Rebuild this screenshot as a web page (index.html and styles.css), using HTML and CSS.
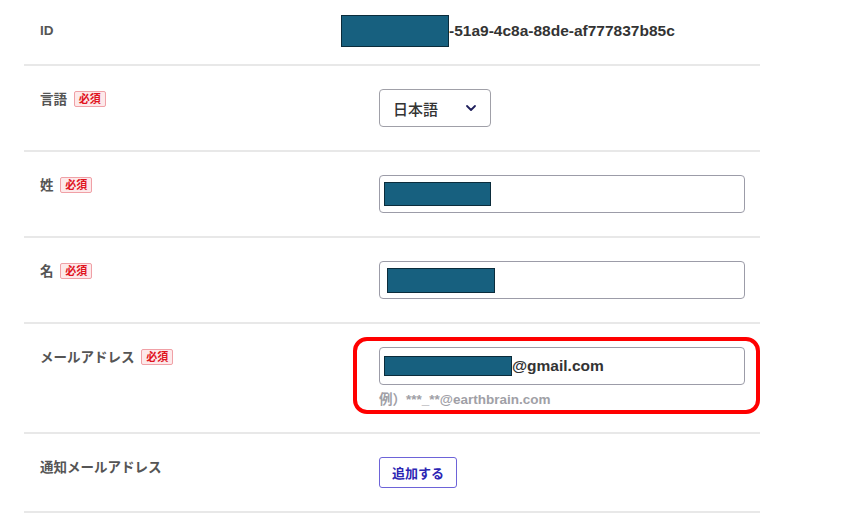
FILE: index.html
```html
<!DOCTYPE html>
<html lang="ja">
<head>
    <meta charset="UTF-8">
    <meta name="viewport" content="width=device-width, initial-scale=1.0">
    <title>アカウント情報</title>
    <link rel="stylesheet" href="styles.css">
</head>
<body>
    <div class="form">
        <div class="row row-id">
            <div class="label">ID</div>
            <div class="control">
                <div class="id-value"><span class="redact redact-id"></span>-51a9-4c8a-88de-af777837b85c</div>
            </div>
        </div>

        <div class="row">
            <div class="label">言語 <span class="required">必須</span></div>
            <div class="control">
                <div class="select">
                    <span>日本語</span>
                    <svg class="chevron" width="12" height="8" viewBox="0 0 12 8" aria-hidden="true">
                        <path d="M2 2 L6 6 L10 2" fill="none" stroke="#1f1f5c" stroke-width="1.8" stroke-linecap="round" stroke-linejoin="round"/>
                    </svg>
                </div>
            </div>
        </div>

        <div class="row">
            <div class="label">姓 <span class="required">必須</span></div>
            <div class="control">
                <div class="input"><span class="redact redact-last"></span></div>
            </div>
        </div>

        <div class="row">
            <div class="label">名 <span class="required">必須</span></div>
            <div class="control">
                <div class="input input-first"><span class="redact redact-first"></span></div>
            </div>
        </div>

        <div class="row">
            <div class="label">メールアドレス <span class="required">必須</span></div>
            <div class="control highlighted">
                <div class="input input-email"><span class="redact redact-email"></span>@gmail.com</div>
                <div class="hint">例）***_**@earthbrain.com</div>
            </div>
        </div>

        <div class="row">
            <div class="label">通知メールアドレス</div>
            <div class="control">
                <button class="add-button">追加する</button>
            </div>
        </div>
    </div>
</body>
</html>
```

FILE: styles.css
```css
body {
    margin: 0;
    background-color: #fff;
    font-family: 'Liberation Sans', Arial, 'Noto Sans CJK JP', sans-serif;
    color: #333;
}

.form {
    width: 736px;
    margin-left: 24px;
}

.row {
    display: flex;
    padding: 23px 0;
    border-bottom: 2px solid #e8e8e8;
}

.row-id {
    padding: 15px 0 17px;
    align-items: center;
}

.label {
    width: 355px;
    flex-shrink: 0;
    padding-left: 16px;
    box-sizing: border-box;
    padding-top: 1px;
    font-size: 13.5px;
    line-height: 20px;
    font-weight: bold;
    color: #555;
}

.row-id .label {
    padding-top: 0;
}

.required {
    display: inline-block;
    margin-left: 3px;
    padding: 0 4px;
    font-size: 11px;
    line-height: 14px;
    font-weight: bold;
    color: #e0141e;
    background-color: #fde9ea;
    border: 1px solid #f0a0a6;
    border-radius: 2px;
    vertical-align: 1px;
}

.control {
    flex: 1;
    position: relative;
}

.id-value {
    display: flex;
    align-items: center;
    font-size: 15.5px;
    font-weight: bold;
    color: #333;
    margin-left: -38px;
}

.redact {
    display: inline-block;
    background-color: #17607f;
    border: 1px solid #0b2c3b;
    box-sizing: border-box;
}

.redact-id {
    width: 108px;
    height: 32px;
}

.select {
    display: flex;
    align-items: center;
    justify-content: space-between;
    width: 112px;
    height: 38px;
    box-sizing: border-box;
    padding: 0 13px 0 13px;
    border: 1px solid #a0a0a8;
    border-radius: 4px;
    font-size: 15px;
    font-weight: 500;
    color: #333;
}

.input {
    display: flex;
    align-items: center;
    width: 366px;
    height: 38px;
    box-sizing: border-box;
    padding: 0 4px;
    border: 1px solid #9c9ca8;
    border-radius: 4px;
    font-size: 15.5px;
    font-weight: bold;
    color: #333;
}

.redact-last {
    width: 107px;
    height: 24px;
}

.input-first {
    padding-left: 7px;
}

.redact-first {
    width: 108px;
    height: 25px;
}

.redact-email {
    width: 128px;
    height: 20px;
}

.hint {
    margin-top: 6px;
    font-size: 13.5px;
    line-height: 18px;
    font-weight: bold;
    color: #a0a0a6;
}

/* annotation frame around the email field */
.highlighted::after {
    content: '';
    position: absolute;
    left: -26px;
    top: -10px;
    right: 0;
    bottom: -5px;
    border: 4px solid #f00;
    border-radius: 14px;
}

.add-button {
    height: 31px;
    padding: 0 12px;
    background-color: #fff;
    border: 1px solid #6d63d8;
    border-radius: 3px;
    font-family: inherit;
    font-size: 13px;
    font-weight: bold;
    color: #2b25b3;
    cursor: pointer;
}
```
